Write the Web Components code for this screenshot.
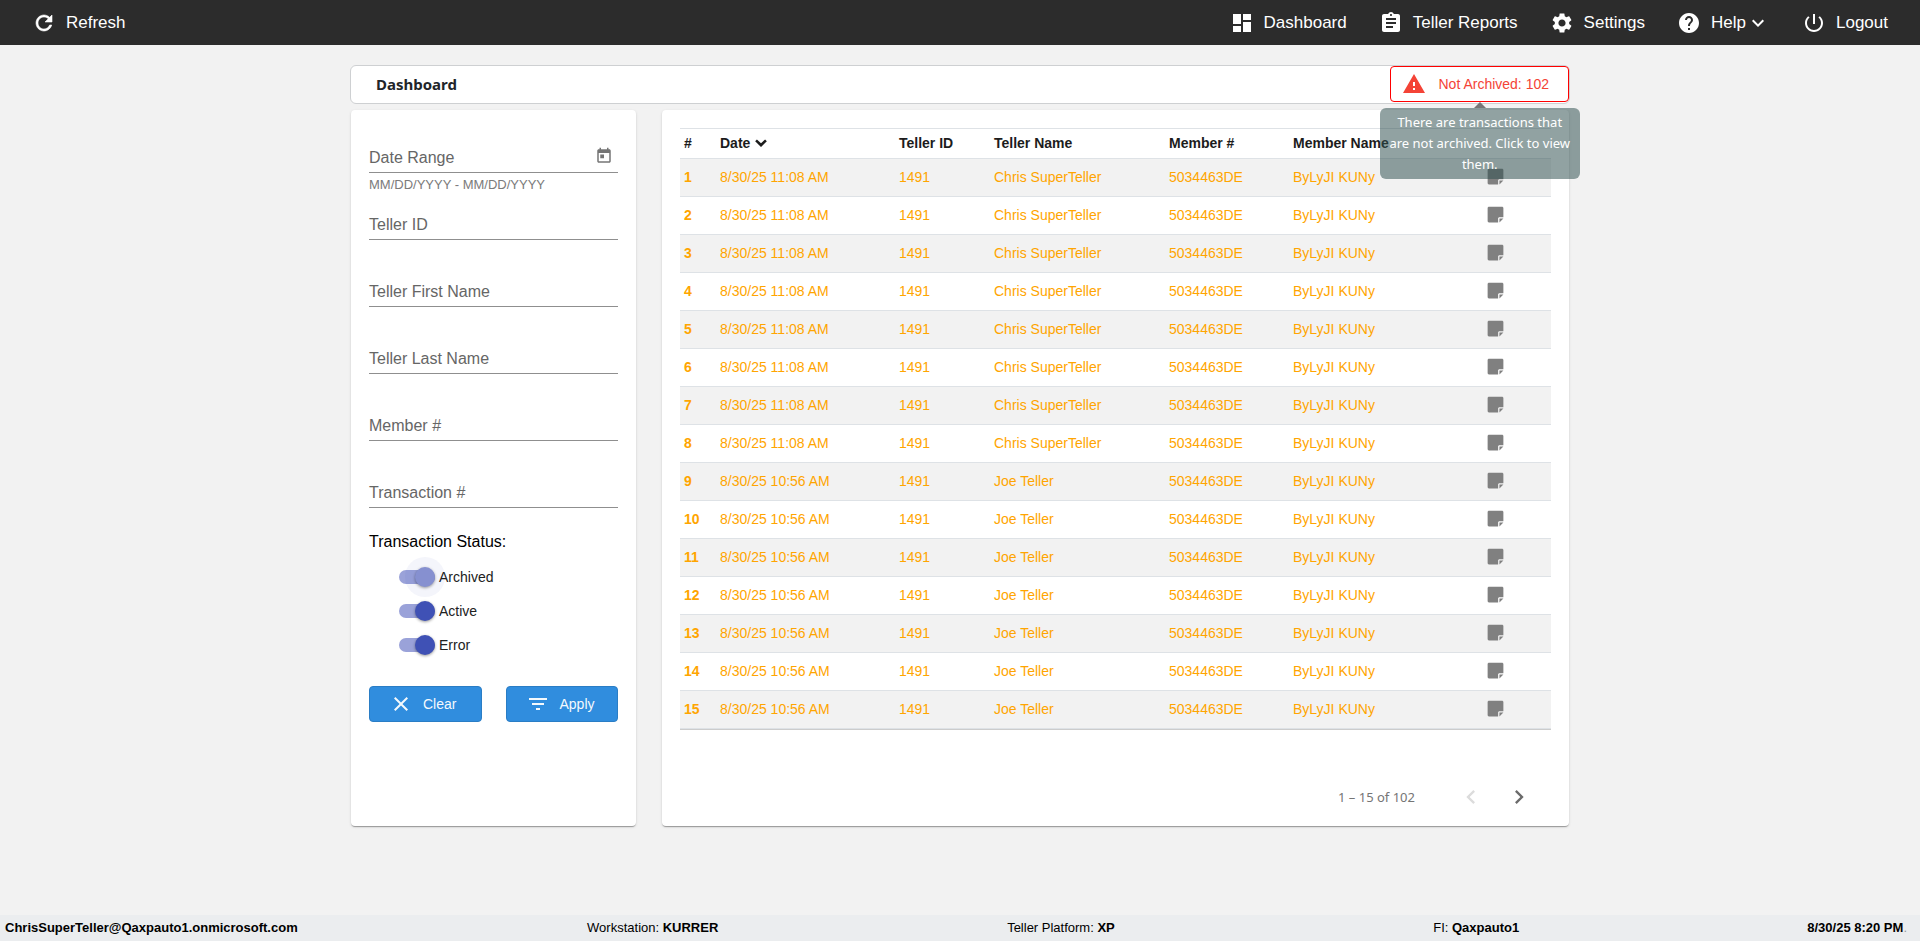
<!DOCTYPE html>
<html lang="en">
<head>
<meta charset="utf-8">
<meta name="viewport" content="width=device-width, initial-scale=1">
<title>Dashboard</title>
<style>
  body {
    margin: 0;
    background: #f2f2f2;
    font-family: 'Liberation Sans', Arial, sans-serif;
    font-size: 14px;
    color: #212529;
  }
</style>
</head>
<body>
<teller-app></teller-app>

<script>
const ICONS = {
  refresh: 'M17.65 6.35C16.2 4.9 14.21 4 12 4c-4.42 0-7.99 3.58-7.99 8s3.57 8 7.99 8c3.73 0 6.84-2.55 7.73-6h-2.08c-.82 2.33-3.04 4-5.65 4-3.31 0-6-2.69-6-6s2.69-6 6-6c1.66 0 3.14.69 4.22 1.78L13 11h7V4l-2.35 2.35z',
  dashboard: 'M3 13h8V3H3v10zm0 8h8v-6H3v6zm10 0h8V11h-8v10zm0-18v6h8V3h-8z',
  assignment: 'M19 3h-4.18C14.4 1.84 13.3 1 12 1c-1.3 0-2.4.84-2.82 2H5c-1.1 0-2 .9-2 2v14c0 1.1.9 2 2 2h14c1.1 0 2-.9 2-2V5c0-1.1-.9-2-2-2zm-7 0c.55 0 1 .45 1 1s-.45 1-1 1-1-.45-1-1 .45-1 1-1zm2 14H7v-2h7v2zm3-4H7v-2h10v2zm0-4H7V7h10v2z',
  settings: 'M19.14 12.94c.04-.3.06-.61.06-.94 0-.32-.02-.64-.07-.94l2.03-1.58c.18-.14.23-.41.12-.61l-1.92-3.32c-.12-.22-.37-.29-.59-.22l-2.39.96c-.5-.38-1.03-.7-1.62-.94l-.36-2.54c-.04-.24-.24-.41-.48-.41h-3.84c-.24 0-.43.17-.47.41l-.36 2.54c-.59.24-1.13.57-1.62.94l-2.39-.96c-.22-.08-.47 0-.59.22L2.74 8.87c-.12.21-.08.47.12.61l2.03 1.58c-.05.3-.09.63-.09.94s.02.64.07.94l-2.03 1.58c-.18.14-.23.41-.12.61l1.92 3.32c.12.22.37.29.59.22l2.39-.96c.5.38 1.03.7 1.62.94l.36 2.54c.05.24.24.41.48.41h3.84c.24 0 .44-.17.47-.41l.36-2.54c.59-.24 1.13-.56 1.62-.94l2.39.96c.22.08.47 0 .59-.22l1.92-3.32c.12-.22.07-.47-.12-.61l-2.01-1.58zM12 15.6c-1.98 0-3.6-1.62-3.6-3.6s1.62-3.6 3.6-3.6 3.6 1.62 3.6 3.6-1.62 3.6-3.6 3.6z',
  help: 'M12 2C6.48 2 2 6.48 2 12s4.48 10 10 10 10-4.48 10-10S17.52 2 12 2zm1 17h-2v-2h2v2zm2.07-7.75l-.9.92C13.45 12.9 13 13.5 13 15h-2v-.5c0-1.1.45-2.1 1.17-2.83l1.24-1.26c.37-.36.59-.86.59-1.41 0-1.1-.9-2-2-2s-2 .9-2 2H8c0-2.21 1.79-4 4-4s4 1.79 4 4c0 .88-.36 1.68-.93 2.25z',
  power: 'M13 3h-2v10h2V3zm4.83 2.17l-1.42 1.42C17.99 7.86 19 9.81 19 12c0 3.87-3.13 7-7 7s-7-3.13-7-7c0-2.19 1.01-4.14 2.58-5.42L6.17 5.17C4.23 6.82 3 9.26 3 12c0 4.97 4.03 9 9 9s9-4.03 9-9c0-2.74-1.23-5.18-3.17-6.83z',
  expand: 'M16.59 8.59L12 13.17 7.41 8.59 6 10l6 6 6-6z',
  warning: 'M1 21h22L12 2 1 21zm12-3h-2v-2h2v2zm0-4h-2v-4h2v4z',
  today: 'M19 3h-1V1h-2v2H8V1H6v2H5c-1.11 0-1.99.9-1.99 2L3 19c0 1.1.89 2 2 2h14c1.1 0 2-.9 2-2V5c0-1.1-.9-2-2-2zm0 16H5V8h14v11zM7 10h5v5H7z',
  clear: 'M19 6.41L17.59 5 12 10.59 6.41 5 5 6.41 10.59 12 5 17.59 6.41 19 12 13.41 17.59 19 19 17.59 13.41 12z',
  filter: 'M10 18h4v-2h-4v2zM3 6v2h18V6H3zm3 7h12v-2H6v2z',
  note: 'M21 15V4.500C21 3.700 20.300 3 19.500 3H4.500C3.700 3 3 3.700 3 4.500v15c0 .8.7 1.500 1.500 1.500H15v-4.500c0-.8.7-1.500 1.500-1.500H21zM16.500 16.500V21l4.500-4.500z',
  left: 'M15.41 7.41L14 6l-6 6 6 6 1.41-1.41L10.83 12z',
  right: 'M10 6L8.59 7.41 13.17 12l-4.58 4.590L10 18l6-6z',
  // heavy chevron of the sorted column
  sort: 'M2 9L5 6l7 6.500L19 6l3 3-10 10z'
}

/**
 * Defines an element whose shadow root holds the given markup.
 *
 * @param {string} name The tag name.
 * @param {Function} render Returns the markup for the element.
 */
function define (name, render) {
  customElements.define(name, class extends HTMLElement {
    constructor () {
      super()
      this.attachShadow({ mode: 'open' })
    }

    connectedCallback () {
      const template = document.createElement('template')
      template.innerHTML = render(this)
      this.shadowRoot.replaceChildren(template.content.cloneNode(true))
    }
  })
}

define('app-icon', el => `
<style>
  :host { display: block; flex: none; width: var(--icon-size, 24px); height: var(--icon-size, 24px); }
  svg { display: block; width: 100%; height: 100%; fill: currentColor; stroke: currentColor; stroke-width: var(--icon-stroke, 0); }
</style>
<svg viewBox="0 0 24 24" aria-hidden="true"><path d="${ICONS[el.getAttribute('name')]}"/></svg>
`)

define('nav-item', el => `
<style>
  :host { display: block; }
  :host([bold]) { --icon-stroke: .6; }
  a {
    display: flex;
    align-items: center;
    gap: 10px;
    color: white;
    font-size: 17px;
    line-height: 20px;
    text-decoration: none;
  }
  .label { display: flex; align-items: center; }
</style>
<a href="#">
  <app-icon name="${el.getAttribute('icon')}"></app-icon>
  <span class="label"><slot></slot>${el.hasAttribute('menu') ? '<app-icon name="expand"></app-icon>' : ''}</span>
</a>
`)

define('top-bar', () => `
<style>
  :host { display: block; background: #2c2c2c; }
  nav {
    display: flex;
    align-items: center;
    gap: 32px;
    height: 45px;
    padding: 0 32px;
  }
  .first { margin-right: auto; }
</style>
<nav>
  <nav-item class="first" icon="refresh" bold>Refresh</nav-item>
  <nav-item icon="dashboard">Dashboard</nav-item>
  <nav-item icon="assignment">Teller Reports</nav-item>
  <nav-item icon="settings">Settings</nav-item>
  <nav-item icon="help" menu>Help</nav-item>
  <nav-item icon="power">Logout</nav-item>
</nav>
`)

define('archive-alert', () => `
<style>
  :host { display: block; position: relative; }
  button {
    display: flex;
    align-items: center;
    gap: 12px;
    height: 36px;
    padding: 0 19px 0 11px;
    border: 1px solid red;
    border-radius: 4px;
    background: white;
    color: #f44336;
    font: inherit;
  }
  .tooltip {
    position: absolute;
    z-index: 2;
    top: 42px;
    left: 50%;
    width: 200px;
    box-sizing: border-box;
    margin-left: -100px;
    padding: 4px 7px;
    border-radius: 6px;
    background: rgba(47, 79, 79, .53);
    color: white;
    font: 13px/21px 'Noto Sans', sans-serif;
    text-align: center;
  }
  .tooltip::before {
    content: '';
    position: absolute;
    bottom: 100%;
    left: 50%;
    margin-left: -6px;
    border: 6px solid transparent;
    border-top: 0;
    border-bottom-color: #777;
  }
</style>
<button type="button" aria-describedby="tip"><app-icon name="warning"></app-icon><slot></slot></button>
<div class="tooltip" id="tip" role="tooltip">There are transactions that are not archived. Click to view them.</div>
`)

define('title-bar', () => `
<style>
  :host {
    display: flex;
    justify-content: space-between;
    border: 1px solid #ced0d2;
    border-radius: 6px;
    background: white;
  }
  h1 {
    margin: 0;
    padding-left: 25px;
    font: bold 15px/37px 'Noto Sans', sans-serif;
  }
</style>
<h1><slot></slot></h1>
<slot name="action"></slot>
`)

define('panel-card', () => `
<style>
  :host {
    display: block;
    min-width: 0;
    padding: 18px 18px 0;
    border-radius: 4px;
    background: white;
    box-shadow: 0 2px 1px -1px rgba(0, 0, 0, .2), 0 1px 1px rgba(0, 0, 0, .14), 0 1px 3px rgba(0, 0, 0, .12);
  }
</style>
<slot></slot>
`)

define('filter-field', el => `
<style>
  :host { display: block; }
  .control {
    display: grid;
    grid-template-columns: 1fr auto;
    height: 44px;
    border-bottom: 1px solid #8f8f8f;
  }
  label {
    grid-area: 1 / 1;
    padding-top: 20px;
    color: #666;
    font-size: 16px;
    line-height: 20px;
    pointer-events: none;
  }
  input {
    grid-area: 1 / 1;
    min-width: 0;
    padding: 16px 0 0;
    border: 0;
    outline: 0;
    background: transparent;
    font: inherit;
    font-size: 16px;
  }
  button {
    grid-area: 1 / 2;
    align-self: center;
    padding: 12px 5px 0;
    border: 0;
    background: none;
    color: #757575;
    --icon-size: 18px;
  }
  .hint {
    height: 22px;
    color: #7b7b7b;
    font-size: 13px;
    line-height: 24px;
  }
</style>
<div class="control">
  <input id="field" type="text">
  <label for="field">${el.getAttribute('label')}</label>
  ${el.hasAttribute('calendar') ? '<button type="button" aria-label="Open calendar"><app-icon name="today"></app-icon></button>' : ''}
</div>
<div class="hint"><slot></slot></div>
`)

define('status-switch', () => `
<style>
  :host { display: block; --thumb: #3f51b5; --halo: transparent; }
  :host([focused]) { --thumb: #8690d0; --halo: rgba(63, 81, 181, .06); }
  label {
    display: flex;
    align-items: center;
    gap: 4px;
    height: 34px;
    line-height: 20px;
  }
  input {
    appearance: none;
    display: flex;
    align-items: center;
    width: 36px;
    height: 14px;
    margin: 0;
    border-radius: 7px;
    background: rgba(0, 0, 0, .38);
  }
  input::before {
    content: '';
    width: 20px;
    height: 20px;
    border-radius: 50%;
    background: white;
  }
  input:checked { justify-content: flex-end; background: #9aa2d9; }
  input:checked::before {
    background: var(--thumb);
    box-shadow: 0 0 0 10px var(--halo), 0 1px 3px rgba(0, 0, 0, .4);
  }
</style>
<label><input type="checkbox" role="switch" checked><slot></slot></label>
`)

define('action-button', el => `
<style>
  :host { display: block; flex: 1; }
  button {
    display: flex;
    align-items: center;
    gap: 10px;
    width: 100%;
    height: 36px;
    padding: 0 19px;
    border: 1px solid #2a7dc5;
    border-radius: 4px;
    background: #308dde;
    color: #f4f9fd;
    font: inherit;
  }
</style>
<button type="button"><app-icon name="${el.getAttribute('icon')}"></app-icon><slot></slot></button>
`)

define('filter-panel', () => `
<style>
  :host { display: block; }
  fieldset { margin: 0; padding: 0; border: 0; color: black; }
  legend { padding: 0; font-size: 16px; line-height: 24px; }
  .switches { padding: 6px 0 24px 30px; color: #212121; }
  .buttons { display: flex; gap: 24px; }
</style>
<form>
  <filter-field label="Date Range" calendar>MM/DD/YYYY - MM/DD/YYYY</filter-field>
  <filter-field label="Teller ID"></filter-field>
  <filter-field label="Teller First Name"></filter-field>
  <filter-field label="Teller Last Name"></filter-field>
  <filter-field label="Member #"></filter-field>
  <filter-field label="Transaction #"></filter-field>
  <fieldset>
    <legend>Transaction Status:</legend>
    <div class="switches">
      <status-switch focused>Archived</status-switch>
      <status-switch>Active</status-switch>
      <status-switch>Error</status-switch>
    </div>
  </fieldset>
  <div class="buttons">
    <action-button icon="clear">Clear</action-button>
    <action-button icon="filter">Apply</action-button>
  </div>
</form>
`)

const transactions = Array.from({ length: 15 }, (_, i) => ({
  date: i < 8 ? '8/30/25 11:08 AM' : '8/30/25 10:56 AM',
  teller: i < 8 ? 'Chris SuperTeller' : 'Joe Teller'
}))

define('transaction-table', () => `
<style>
  :host { display: block; }
  table {
    width: 100%;
    border-collapse: collapse;
    table-layout: fixed;
    box-shadow: 0 1px 0 #ccc;
  }
  .num { width: 36px; }
  .date { width: 179px; }
  .id { width: 95px; }
  .teller { width: 175px; }
  .member { width: 124px; }
  .note { width: 70px; }
  th, td {
    box-sizing: border-box;
    padding: 0 4px 2px;
    border-top: 1px solid #dee2e6;
    text-align: left;
    line-height: 20px;
    white-space: nowrap;
  }
  thead th { height: 30px; color: #1c1c1c; }
  tbody th, tbody td { height: 38px; color: orange; }
  tbody tr { background: white; }
  tbody tr:nth-child(odd) { background: #f2f2f2; }
  tbody tr:last-child > * { border-bottom: 1px solid #dee2e6; }
  thead button {
    display: flex;
    align-items: center;
    gap: 4px;
    padding: 0;
    border: 0;
    background: none;
    color: inherit;
    font: inherit;
    --icon-size: 14px;
  }
  tbody button {
    display: block;
    padding: 0;
    border: 0;
    background: none;
    color: #808080;
    --icon-size: 21px;
  }
</style>
<table>
  <colgroup>
    <col class="num"><col class="date"><col class="id"><col class="teller"><col class="member"><col><col class="note">
  </colgroup>
  <thead>
    <tr>
      <th scope="col">#</th>
      <th scope="col"><button type="button">Date <app-icon name="sort"></app-icon></button></th>
      <th scope="col">Teller ID</th>
      <th scope="col">Teller Name</th>
      <th scope="col">Member #</th>
      <th scope="col">Member Name</th>
      <td></td>
    </tr>
  </thead>
  <tbody>
    ${transactions.map((row, i) => `
    <tr>
      <th scope="row">${i + 1}</th>
      <td>${row.date}</td>
      <td>1491</td>
      <td>${row.teller}</td>
      <td>5034463DE</td>
      <td>ByLyJI KUNy</td>
      <td><button type="button" aria-label="View note"><app-icon name="note"></app-icon></button></td>
    </tr>`).join('')}
  </tbody>
</table>
`)

define('page-nav', () => `
<style>
  :host {
    display: flex;
    align-items: center;
    justify-content: flex-end;
    height: 58px;
    margin-top: 39px;
    padding-right: 8px;
    color: #757575;
    font: 13px/20px 'Noto Sans', sans-serif;
  }
  .range { margin-right: 32px; }
  button {
    display: grid;
    place-content: center;
    width: 48px;
    height: 40px;
    padding: 0;
    border: 0;
    background: none;
    color: #6b6b6b;
    --icon-size: 28px;
  }
  button:disabled { color: #dcdcdc; }
</style>
<span class="range"><slot></slot></span>
<button type="button" aria-label="Previous page" disabled><app-icon name="left"></app-icon></button>
<button type="button" aria-label="Next page"><app-icon name="right"></app-icon></button>
`)

define('status-footer', () => `
<style>
  :host {
    display: grid;
    grid-template-columns: 582fr 420fr 426fr 374fr auto;
    padding: 0 13px 0 5px;
    background: #ebedef;
    color: black;
    font-size: 13px;
    line-height: 26px;
    white-space: nowrap;
  }
  i { color: #999; font-style: normal; }
</style>
<b>ChrisSuperTeller@Qaxpauto1.onmicrosoft.com</b>
<span>Workstation: <b>KURRER</b></span>
<span>Teller Platform: <b>XP</b></span>
<span>FI: <b>Qaxpauto1</b></span>
<span><b>8/30/25 8:20 PM</b><i>.</i></span>
`)

define('teller-app', () => `
<style>
  :host { display: flex; flex-direction: column; min-height: 100vh; }
  main {
    box-sizing: border-box;
    width: 100%;
    max-width: 1220px;
    margin: 20px auto auto;
  }
  .columns {
    display: grid;
    grid-template-columns: 285px 1fr;
    gap: 26px;
    margin-top: 6px;
    padding: 0 1px;
  }
</style>
<top-bar></top-bar>
<main>
  <title-bar>Dashboard<archive-alert slot="action">Not Archived: 102</archive-alert></title-bar>
  <div class="columns">
    <panel-card><filter-panel></filter-panel></panel-card>
    <panel-card>
      <transaction-table></transaction-table>
      <page-nav>1 – 15 of 102</page-nav>
    </panel-card>
  </div>
</main>
<status-footer></status-footer>
`)
</script>
</body>
</html>
